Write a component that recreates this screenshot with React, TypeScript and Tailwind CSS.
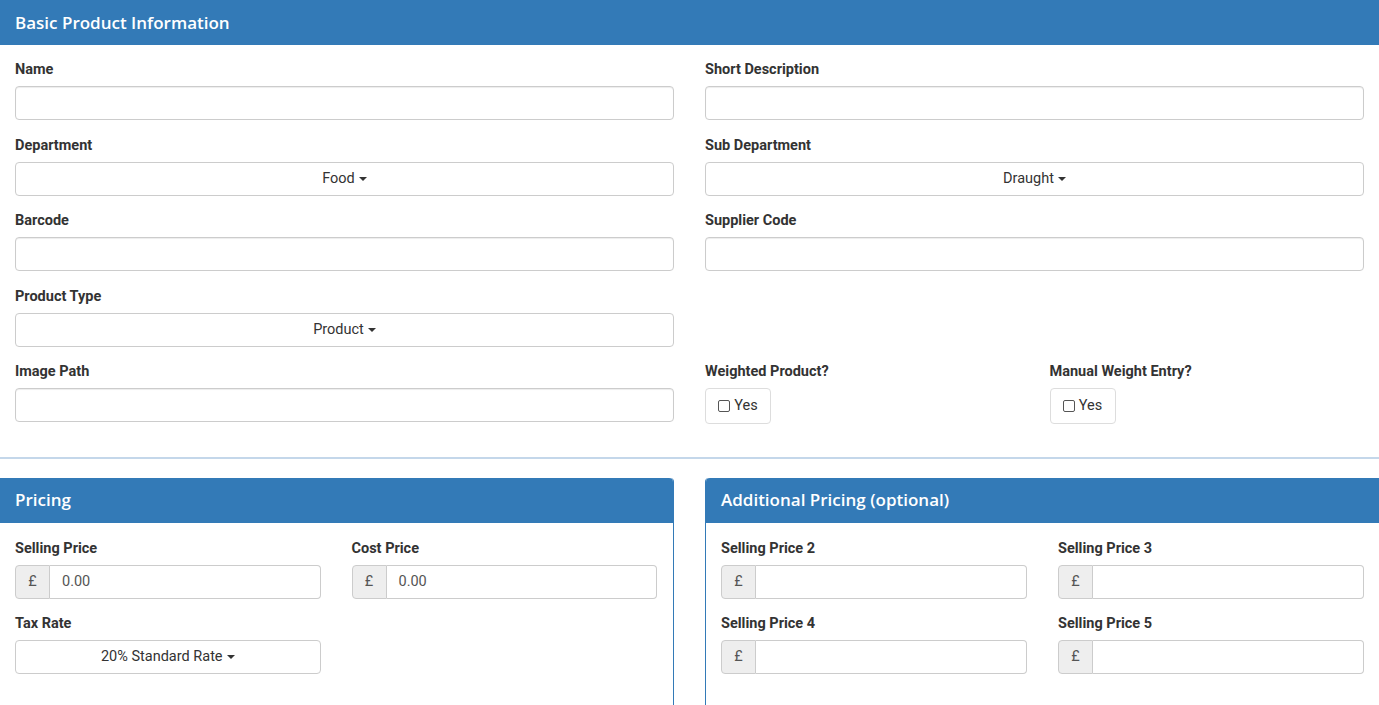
import React from "react";

const lbl = "block text-[14.5px] font-bold text-[#333] mb-[6px] leading-[20px]";
const inp = "h-[34px] w-full rounded-[4px] border border-[#ccc] bg-white shadow-[inset_0_1px_1px_rgba(0,0,0,0.075)]";

function Caret() {
  return <span className="inline-block ml-[4px] align-middle border-t-[4px] border-t-[#333] border-x-[4px] border-x-transparent" />;
}

function Field({ label, children }: { label: string; children?: React.ReactNode }) {
  return (
    <div className="h-[75.5px]">
      <label className={lbl}>{label}</label>
      {children ?? <div className={inp} />}
    </div>
  );
}

function Select({ text }: { text: string }) {
  return (
    <div className="h-[34px] w-full rounded-[4px] border border-[#ccc] bg-white flex items-center justify-center text-[14.5px] text-[#333]">
      {text}
      <Caret />
    </div>
  );
}

function Money({ value }: { value?: string }) {
  return (
    <div className="h-[34px] w-full flex">
      <div className="w-[35px] flex items-center justify-center bg-[#eee] border border-[#ccc] rounded-l-[4px] text-[14.5px] text-[#555]">£</div>
      <div className="flex-1 border border-l-0 border-[#ccc] rounded-r-[4px] bg-white flex items-center px-[12px] text-[14.5px] text-[#555]">{value}</div>
    </div>
  );
}

function Check() {
  return (
    <div className="h-[36px] w-[66px] rounded-[4px] border border-[#ddd] flex items-center justify-center gap-[4px] text-[14.5px] text-[#333]">
      <span className="w-[12px] h-[12px] border border-[#555] rounded-[2px]" />
      Yes
    </div>
  );
}

const head = "h-[45px] bg-[#337ab7] text-white flex items-center px-[15px] text-[17px] font-semibold";
const headFont = { fontFamily: "'Open Sans', Lato, sans-serif" };

export default function App() {
  return (
    <div className="w-[1379px] h-[705px] overflow-hidden bg-white" style={{ fontFamily: "Roboto, 'Liberation Sans', sans-serif" }}>
      <div className="border-b-2 border-[#c4d7ea]">
        <div className={head} style={headFont}>Basic Product Information</div>
        <div className="px-[15px] pt-[15px] pb-[19px] grid grid-cols-2 gap-x-[31px]">
          <div>
            <Field label="Name" />
            <Field label="Department"><Select text="Food" /></Field>
            <Field label="Barcode" />
            <Field label="Product Type"><Select text="Product" /></Field>
            <Field label="Image Path" />
          </div>
          <div>
            <Field label="Short Description" />
            <Field label="Sub Department"><Select text="Draught" /></Field>
            <Field label="Supplier Code" />
            <div className="h-[75.5px]" />
            <div className="grid grid-cols-2 gap-x-[30px] h-[75.5px]">
              <div><label className={lbl}>Weighted Product?</label><Check /></div>
              <div><label className={lbl}>Manual Weight Entry?</label><Check /></div>
            </div>
          </div>
        </div>
      </div>
      <div className="mt-[19px] flex gap-[31px]">
        <div className="w-[674px] h-[240px] border-r border-[#337ab7] rounded-tr-[4px]">
          <div className={head + " rounded-tr-[4px]"} style={headFont}>Pricing</div>
          <div className="px-[15px] pt-[16px] grid grid-cols-2 gap-x-[31px] pr-[16px]">
            <Field label="Selling Price"><Money value="0.00" /></Field>
            <Field label="Cost Price"><Money value="0.00" /></Field>
            <Field label="Tax Rate"><Select text="20% Standard Rate" /></Field>
          </div>
        </div>
        <div className="flex-1 h-[240px] border-l border-[#337ab7] rounded-tl-[4px]">
          <div className={head + " rounded-tl-[4px]"} style={headFont}>Additional Pricing (optional)</div>
          <div className="px-[15px] pt-[16px] grid grid-cols-2 gap-x-[31px]">
            <Field label="Selling Price 2"><Money /></Field>
            <Field label="Selling Price 3"><Money /></Field>
            <Field label="Selling Price 4"><Money /></Field>
            <Field label="Selling Price 5"><Money /></Field>
          </div>
        </div>
      </div>
    </div>
  );
}
